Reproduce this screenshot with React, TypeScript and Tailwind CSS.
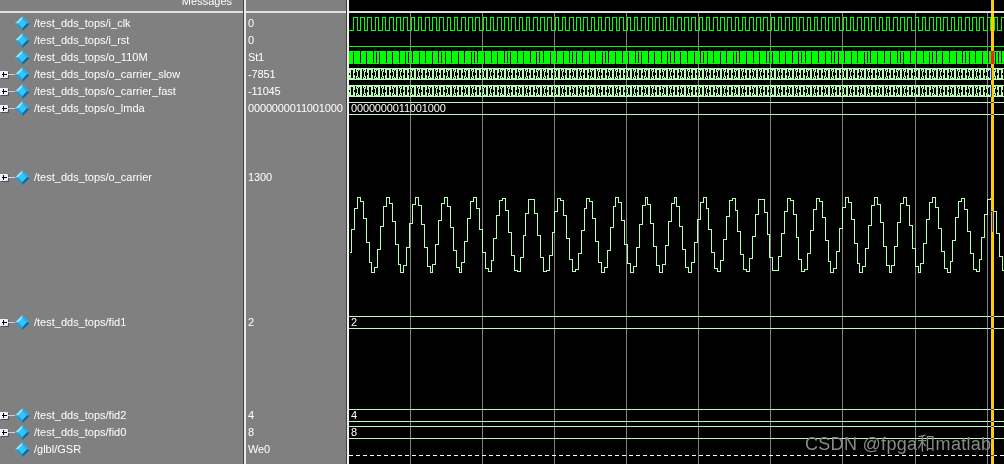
const FONT = "font-['Liberation_Sans',Arial,sans-serif]";

type Row = { name: string; value: string; h: string; pt: string; tree?: boolean };

const rows: Row[] = [
  { name: '/test_dds_tops/i_clk', value: '0', h: 'h-[17px]', pt: 'pt-0' },
  { name: '/test_dds_tops/i_rst', value: '0', h: 'h-[17px]', pt: 'pt-0' },
  { name: '/test_dds_tops/o_110M', value: 'St1', h: 'h-[17px]', pt: 'pt-0' },
  { name: '/test_dds_tops/o_carrier_slow', value: '-7851', h: 'h-[17px]', pt: 'pt-0', tree: true },
  { name: '/test_dds_tops/o_carrier_fast', value: '-11045', h: 'h-[17px]', pt: 'pt-0', tree: true },
  { name: '/test_dds_tops/o_lmda', value: '0000000011001000', h: 'h-[17px]', pt: 'pt-0', tree: true },
  { name: '/test_dds_tops/o_carrier', value: '1300', h: 'h-[197px]', pt: 'pt-[52px]', tree: true },
  { name: '/test_dds_tops/fid1', value: '2', h: 'h-[93px]', pt: 'pt-0', tree: true },
  { name: '/test_dds_tops/fid2', value: '4', h: 'h-[17px]', pt: 'pt-0', tree: true },
  { name: '/test_dds_tops/fid0', value: '8', h: 'h-[17px]', pt: 'pt-0', tree: true },
  { name: '/glbl/GSR', value: 'We0', h: 'h-[17px]', pt: 'pt-0' },
];

const GRID = [410, 482, 554, 626, 698, 770, 842, 915, 987];
const BUS = '#b4ffb4';

function clkPath() {
  let d = 'M349 30.5H353.5';
  let high = true;
  for (let k = 1; k < 190; k++) {
    const x = Math.round(353 + k * 3.6) + 0.5;
    d += `V${high ? 17.5 : 30.5}H${x}`;
    high = !high;
  }
  return d;
}

function slits() {
  let d = '';
  let k = 0;
  for (let x = 353; x < 1004; x += 6.55) {
    const px = Math.round(x);
    d += k % 2 === 0 ? `M${px} 52h1v12h-1z` : `M${px} 51h1v12h-1z`;
    if (k % 5 === 3) d += `M${px + 3} 52h1v11h-1z`;
    k++;
  }
  return d;
}

function busPath(y0: number, y1: number) {
  let d = '';
  for (let x = 349; x < 1004; x += 3.6) {
    d += `M${x} ${y0}L${x + 2.4} ${y1}H${x + 3.6}M${x} ${y1}L${x + 2.4} ${y0}H${x + 3.6}`;
  }
  return d;
}

// the thick comb along the top and bottom of a fast-changing bus
function busComb(y0: number, y1: number) {
  let d = '';
  for (let x = 349; x < 1004; x += 3.6) {
    const px = Math.round(x);
    d += `M${px} ${y0}h2v2h-2zM${px} ${y1 - 2}h2v2h-2z`;
  }
  return d;
}

function carrierPath() {
  const step = 2.905;
  const period = 28.7;
  let d = '';
  let last = 0;
  for (let k = 0; k < 226; k++) {
    const x = 348.2 + k * step;
    const y = Math.round(234.5 - 37.5 * Math.sin((2 * Math.PI * (x - 350.4)) / period)) + 0.5;
    const px = Math.max(Math.round(x), 349) + 0.5;
    d += k === 0 ? `M${px} ${y}` : `H${px}V${y}`;
    last = px;
  }
  return d + `H${last + 3}`;
}

function Diamond() {
  return (
    <svg width="15" height="15" viewBox="0 0 15 15" className="shrink-0">
      <path d="M7.5 0L0 7.5L3.5 7.5L7.5 3Z" fill="#8fe4ff" />
      <path d="M7.5 0L15 7.5L11.5 7.5L7.5 3Z" fill="#20aef0" />
      <path d="M0 7.5L7.5 15L7.5 12L3.5 7.5Z" fill="#1c9ee0" />
      <path d="M15 7.5L7.5 15L7.5 12L11.5 7.5Z" fill="#0868a8" />
      <path d="M7.5 3L11.5 7.5L7.5 12L3.5 7.5Z" fill="#30c8fc" />
    </svg>
  );
}

function Expander() {
  return (
    <div className="absolute left-0 top-[5px] flex items-center">
      <div className="flex h-[7px] w-[8px] items-center justify-center rounded-r-[1px] bg-[#f0f0ff] shadow-[1px_1px_0_#505050]">
        <span className="block h-[1px] w-[5px] bg-black" />
        <span className="absolute left-[3px] top-[1px] block h-[5px] w-[1px] bg-black" />
      </div>
      <span className="h-[1px] w-[7px] bg-[#d0d0d0]" />
    </div>
  );
}

function Waves() {
  return (
    <svg viewBox="349 0 655 464" width="655" height="464" className="block">
      <rect x="349" y="0" width="655" height="464" fill="#000" />
      {GRID.map((x) => (
        <rect key={x} x={x} y="13" width="1" height="451" fill="#808080" />
      ))}

      <g shapeRendering="crispEdges" fill="none">
        <path d={clkPath()} stroke="#00ff00" />
        <path d="M349 46.5H1004" stroke="#00ff00" />
        <rect x="349" y="51" width="655" height="13" fill="#00ff00" />
        <path d={slits()} fill="#000" />
        <path d={busPath(68.5, 79.5)} stroke={BUS} />
        <path d={busComb(68, 80)} fill={BUS} />
        <path d={busPath(85.5, 96.5)} stroke={BUS} />
        <path d={busComb(85, 97)} fill={BUS} />
        <path d="M349 102.5H1004M349 114.5H1004" stroke={BUS} />
        <path d={carrierPath()} stroke={BUS} />
        <path d="M349 316.5H1004M349 328.5H1004" stroke={BUS} />
        <path d="M349 409.5H1004M349 421.5H1004" stroke={BUS} />
        <path d="M349 426.5H1004M349 438.5H1004" stroke={BUS} />
        <path d="M349 455.5H1004" stroke="#fff" strokeDasharray="4 3" />
      </g>

      <rect x="991" y="0" width="3" height="464" fill="#ffcc00" />
      <rect x="991" y="51" width="3" height="13" fill="#ff2000" />
      <g shapeRendering="crispEdges" fill="none" stroke="#3030e0">
        <path d="M990.5 211.5H992.5V231.5" />
        <path d="M991.5 68V80M991.5 85V97" />
        <path d="M991 102.5H994M991 114.5H994M991 316.5H994M991 328.5H994" />
        <path d="M991 409.5H994M991 421.5H994M991 426.5H994M991 438.5H994M991 455.5H994" />
      </g>
      <rect x="349" y="11" width="655" height="2" fill="#e0e0e0" />
    </svg>
  );
}

function BusLabel({ text, y }: { text: string; y: string }) {
  return (
    <span className={`absolute left-[351px] ${y} leading-[12px] tracking-[-0.15px] will-change-transform`}>{text}</span>
  );
}

export default function App() {
  return (
    <div className={`relative flex h-[464px] w-[1004px] overflow-hidden bg-[#808080] ${FONT} text-[11px] text-white`}>
      <div className="flex w-[346px] shrink-0 flex-col will-change-transform">
        <div className="flex h-[11px] shrink-0">
          <div className="relative w-[243px] overflow-hidden">
            <span className="absolute right-[11px] top-[-7px] leading-[17px]">Messages</span>
          </div>
        </div>
        <div className="h-[2px] shrink-0 bg-[#e0e0e0]" />
        <div className="h-[2px] shrink-0" />
        {rows.map((r) => (
          <div key={r.name} className={`flex shrink-0 ${r.h}`}>
            <div className={`relative flex w-[243px] ${r.pt}`}>
              <div className="relative flex h-[17px] items-center">
                {r.tree && <Expander />}
                <div className="ml-[15px] flex items-center gap-[4px]">
                  <Diamond />
                  <span className="whitespace-nowrap">{r.name}</span>
                </div>
              </div>
            </div>
            <div className={`pl-[5px] leading-[17px] tracking-[-0.15px] ${r.pt}`}>{r.value}</div>
          </div>
        ))}
      </div>
      <div className="absolute bottom-0 left-[243px] top-0 w-[3px] bg-[linear-gradient(90deg,#404040_0_1px,#e8e8e8_1px_3px)]" />
      <div className="w-[3px] shrink-0 bg-[linear-gradient(90deg,#404040_0_1px,#f0f0f0_1px_3px)]" />
      <Waves />
      <BusLabel text="0000000011001000" y="top-[102px]" />
      <BusLabel text="2" y="top-[316px]" />
      <BusLabel text="4" y="top-[409px]" />
      <BusLabel text="8" y="top-[426px]" />
      <span className="absolute right-[13px] top-[433px] font-['Liberation_Sans','Noto_Sans_CJK_SC',sans-serif] text-[18px] leading-[22px] tracking-[0.3px] text-[#8a8a8a] will-change-transform">
        CSDN @fpga和matlab
      </span>
    </div>
  );
}
